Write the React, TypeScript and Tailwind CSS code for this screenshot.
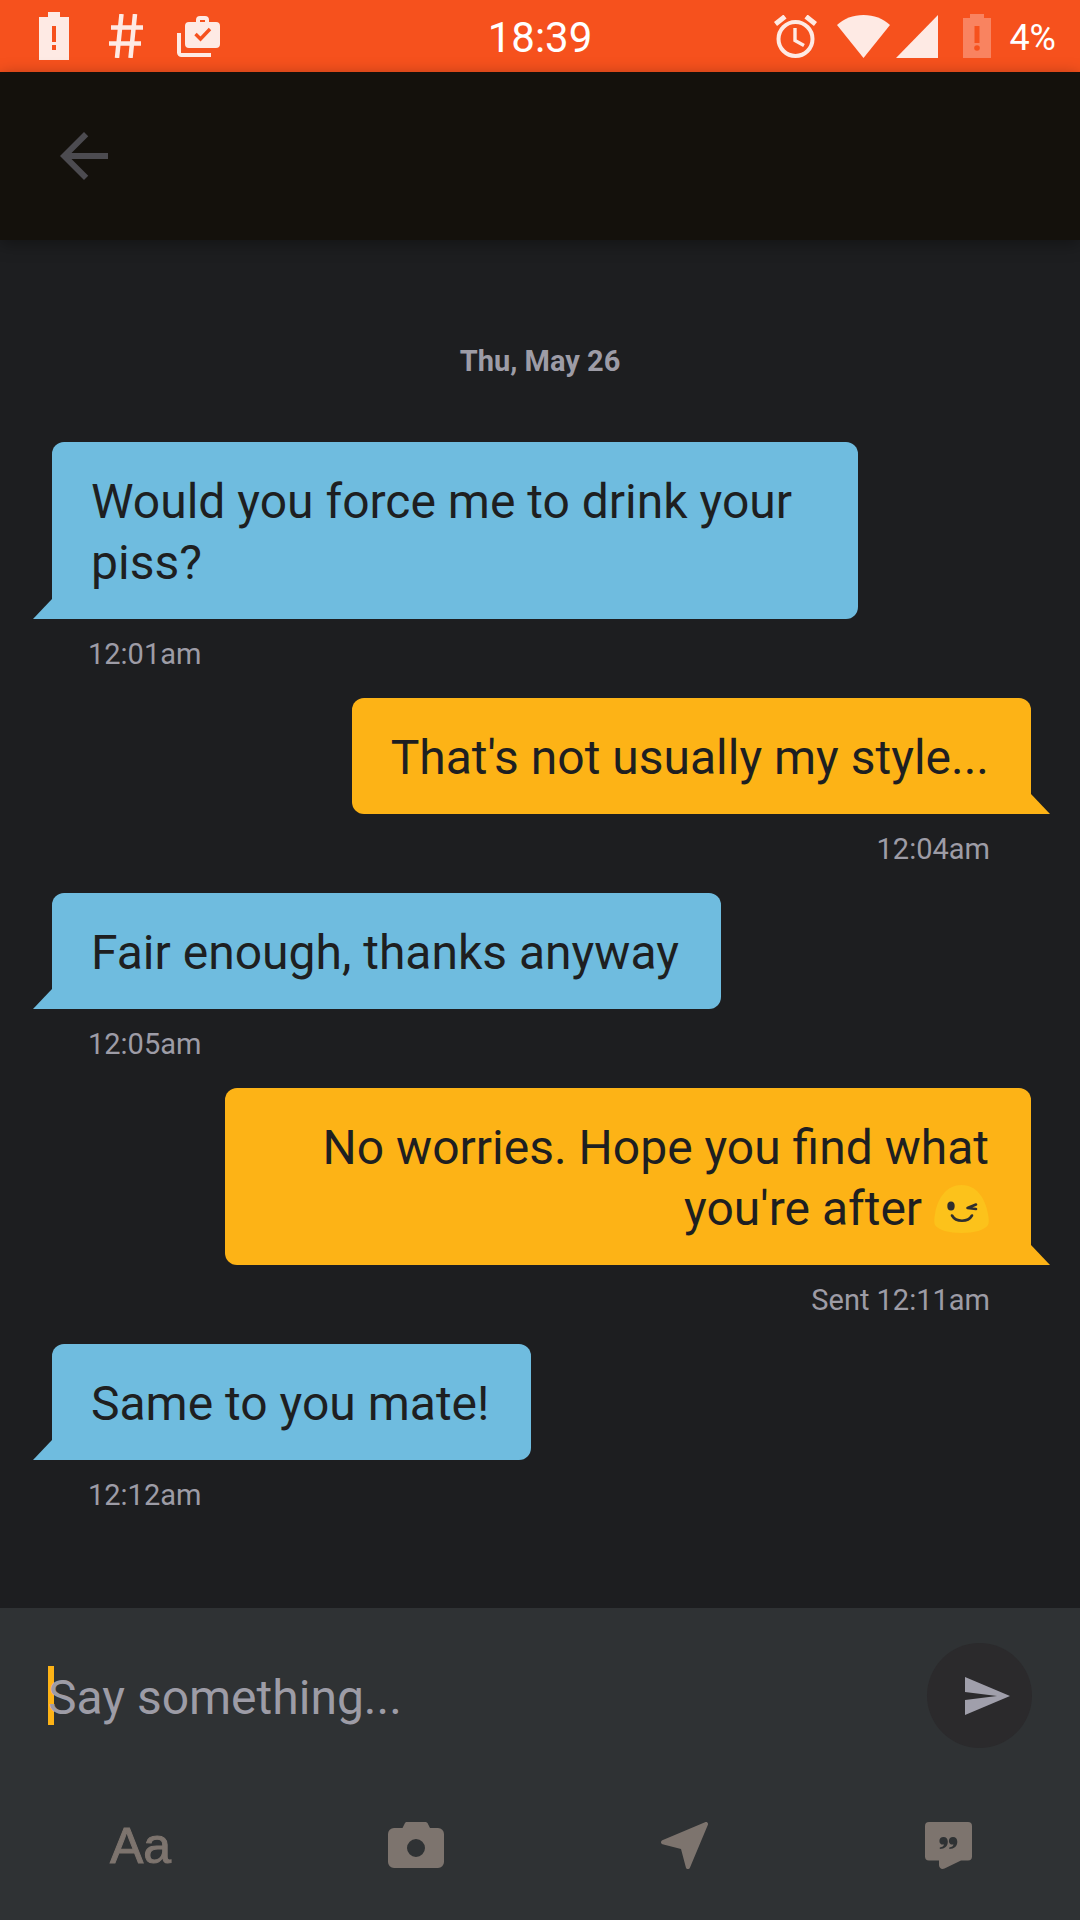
import type { ReactNode } from "react";

type Message = { from: "them" | "me"; body: ReactNode; time: string };

function WinkEmoji() {
  return (
    <svg role="img" aria-label="winking face" viewBox="0 0 55 48" className="inline-block h-12 w-[55px] align-[-8px]">
      <path d="M27.500 0C42 0 51 12 54 29c1 5 1 9 0 11-3 5-14 8-26.500 8S4 45 1 40c-1-2-1-6 0-11C4 12 13 0 27.500 0Z" fill="#fcc21b" />
      <ellipse cx="17" cy="21" rx="3.700" ry="4.500" fill="#2f2f2f" />
      <path d="M42 19.500 33.500 23 42 24" fill="none" stroke="#2f2f2f" strokeWidth="2.600" strokeLinecap="round" strokeLinejoin="round" />
      <path d="M18 30.500c4 7 16 7 20 0" fill="none" stroke="#2f2f2f" strokeWidth="2.600" strokeLinecap="round" />
    </svg>
  );
}

const messages: Message[] = [
  { from: "them", body: "Would you force me to drink your piss?", time: "12:01am" },
  { from: "me", body: "That's not usually my style...", time: "12:04am" },
  { from: "them", body: "Fair enough, thanks anyway", time: "12:05am" },
  {
    from: "me",
    body: (
      <>
        No worries. Hope you find what you're after <WinkEmoji />
      </>
    ),
    time: "Sent 12:11am",
  },
  { from: "them", body: "Same to you mate!", time: "12:12am" },
];

function StatusBar() {
  return (
    <div className="flex h-[72px] shrink-0 items-center bg-[#f6511d] px-6 text-white">
      <div className="flex flex-1 items-center text-[#feeae4]">
        <svg viewBox="0 0 30 48" className="ml-[15px] h-12 w-[30px]" fill="currentColor" aria-hidden="true">
          <path fillRule="evenodd" d="M9 0h12v5h9v43H0V5h9zM13 14v16h4V14zM13 33v5h4v-5z" />
        </svg>
        <svg viewBox="0 0 34 44" className="ml-10 h-11 w-[34px]" fill="none" stroke="currentColor" strokeWidth="4.500" aria-hidden="true">
          <path d="M12.500 0 8 44M26 0 21.500 44M2 13.500h32M0 29.500h32" />
        </svg>
        <svg viewBox="0 0 43 41" className="ml-[34px] h-[41px] w-[43px]" aria-hidden="true">
          <path d="M2 17v19.500a2.500 2.500 0 0 0 2.500 2.500H34" fill="none" stroke="currentColor" strokeWidth="4" />
          <path fill="currentColor" fillRule="evenodd" d="M12 6h7V4a4 4 0 0 1 4-4h5a4 4 0 0 1 4 4v2h7a4 4 0 0 1 4 4v18a4 4 0 0 1-4 4H12a4 4 0 0 1-4-4V10a4 4 0 0 1 4-4zm11 0h5V4h-5z" />
          <path d="m18.500 18 5 5L33 13" fill="none" stroke="#f6511d" strokeWidth="3.400" />
        </svg>
      </div>
      <time className="pt-1 text-[42px] leading-none">18:39</time>
      <div className="flex flex-1 items-center justify-end text-[#feeae4]">
        <svg viewBox="0 0 43 43" className="h-[43px] w-[43px]" fill="none" stroke="currentColor" aria-hidden="true">
          <circle cx="21.500" cy="24" r="17" strokeWidth="4" />
          <path d="M1.500 9 11 1.500M32 1.500 41.500 9" strokeWidth="5" />
          <path d="M21 13v12.500l9 5" strokeWidth="3.400" />
        </svg>
        <svg viewBox="0 0 53 43" className="ml-5 h-[43px] w-[53px]" fill="currentColor" aria-hidden="true">
          <path d="M26.500 43 0 10C7 3.500 16 0 26.500 0S46 3.500 53 10z" />
        </svg>
        <svg viewBox="0 0 42 43" className="ml-[6px] h-[43px] w-[42px]" fill="currentColor" aria-hidden="true">
          <path d="M42 0v43H0z" />
        </svg>
        <svg viewBox="0 0 28 44" className="ml-[25px] h-11 w-7" aria-hidden="true">
          <path d="M7 0h14v4h7v40H0V4h7z" fill="#f98360" />
          <path d="M11.500 12h5v17h-5z" fill="#f6511d" />
          <circle cx="14" cy="34" r="2.800" fill="#f6511d" />
        </svg>
        <span className="ml-[18px] pt-1 text-[36px] leading-none text-white">4%</span>
      </div>
    </div>
  );
}

function Bubble({ message }: { message: Message }) {
  const mine = message.from === "me";
  return (
    <li className={mine ? "flex flex-col items-end text-right" : "flex flex-col items-start"}>
      <div
        className={
          mine
            ? "relative max-w-[806px] rounded-xl rounded-br-none bg-[#fdb316] pt-[29px] pr-[42px] pb-[26px] pl-[39px] text-[48px] leading-[61px] text-[#1e1f21]"
            : "relative max-w-[806px] rounded-xl rounded-bl-none bg-[#6fbcdf] pt-[29px] pr-[42px] pb-[26px] pl-[39px] text-[48px] leading-[61px] text-[#1e1f21]"
        }
      >
        {message.body}
        <svg
          viewBox="0 0 19 20"
          aria-hidden="true"
          className={mine ? "absolute bottom-0 left-full h-5 w-[19px] text-[#fdb316]" : "absolute right-full bottom-0 h-5 w-[19px] text-[#6fbcdf]"}
        >
          <path d={mine ? "M0 0 19 20H0z" : "M19 0V20H0z"} fill="currentColor" />
        </svg>
      </div>
      <time className="mt-[15px] mb-6 pr-[41px] pl-9 text-[29px] leading-10 text-[#9d9ca6]">{message.time}</time>
    </li>
  );
}

export default function App() {
  return (
    <div className="flex min-h-screen flex-col bg-[#1d1e20] font-[Roboto,sans-serif]">
      <StatusBar />
      <header className="flex h-[168px] shrink-0 items-center bg-[#14110c] px-12 shadow-[0_4px_16px_rgba(0,0,0,0.35)]">
        <button type="button" aria-label="Back" className="text-[#4c4b50]">
          <svg viewBox="0 0 24 24" className="h-[72px] w-[72px]" fill="currentColor">
            <path d="M20 11H7.830l5.590-5.590L12 4l-8 8 8 8 1.410-1.410L7.830 13H20v-2z" />
          </svg>
        </button>
      </header>

      <main className="flex-1 pt-[101px]">
        <h2 className="mb-[61px] text-center text-[29px] leading-10 font-bold text-[#9d9ca6]">Thu, May 26</h2>
        <ul className="pr-[49px] pl-[52px]">
          {messages.map((m) => (
            <Bubble key={m.time} message={m} />
          ))}
        </ul>
      </main>

      <footer className="shrink-0 bg-[#2f3234] pt-[35px] pb-[51px]">
        <form className="flex h-[105px] items-center px-12" onSubmit={(e) => e.preventDefault()}>
          <div className="relative flex-1">
            <span className="absolute top-0 left-0 h-[59px] w-1.5 bg-[#fdb316]" aria-hidden="true" />
            <input
              type="text"
              aria-label="Message"
              placeholder="Say something..."
              className="relative block h-[60px] w-full bg-transparent pt-1 text-[48px] text-[#9d9ca6] outline-none placeholder:text-[#9d9ca6] placeholder:opacity-100"
            />
          </div>
          <button type="submit" aria-label="Send" className="flex h-[105px] w-[105px] items-center justify-center rounded-full bg-[#2b2a2c] pl-4">
            <svg viewBox="0 0 45 38" className="h-[38px] w-[45px]" fill="#a09fab">
              <path d="M0 0 45 19 0 38V23l32-4L0 15z" />
            </svg>
          </button>
        </form>
        <div className="mt-[74px] flex h-[47px] items-center justify-between pr-[108px] pl-[110px] text-[#7d746e]">
          <button type="button" aria-label="Text" className="font-['Liberation_Sans',sans-serif] text-[50px] leading-none [-webkit-text-stroke:1px_currentColor]">
            Aa
          </button>
          <button type="button" aria-label="Photo">
            <svg viewBox="0 0 56 47" className="h-[47px] w-14" fill="currentColor">
              <path fillRule="evenodd" d="M18 0h20l1.500 1 2.500 5h8a6 6 0 0 1 6 6v28a6 6 0 0 1-6 6H6a6 6 0 0 1-6-6V12a6 6 0 0 1 6-6h8.500l2.500-5zm10 17a9 9 0 1 0 0 18 9 9 0 0 0 0-18z" />
            </svg>
          </button>
          <button type="button" aria-label="Location">
            <svg viewBox="0 0 47 47" className="h-[47px] w-[47px]" fill="currentColor">
              <path d="M44 .2c2-.6 3.600.8 2.800 2.900L29 45.500c-.8 2-3.500 2-4.100 0L20 27 1.500 22.200c-2-.6-2-3.200-.2-4z" />
            </svg>
          </button>
          <button type="button" aria-label="Saved phrases">
            <svg viewBox="0 0 47 47" className="h-[47px] w-[47px]">
              <path d="M4 0h39a4 4 0 0 1 4 4v30.500a4 4 0 0 1-4 4h-7L19.500 46.600c-3 1.200-5.500-.6-5.500-3.600v-4.500H4a4 4 0 0 1-4-4V4a4 4 0 0 1 4-4z" fill="currentColor" />
              <g fill="#2f3234">
                <path d="M18.500 15c2.700 0 4.300 2 4.300 4.800 0 4.200-3 7.200-8 7.200v-1.500c2.600-.3 4-1.500 4.200-3-3 .5-4.600-1.300-4.600-3.600S16 15 18.500 15z" />
                <path d="M28 15c2.700 0 4.300 2 4.300 4.800 0 4.200-3 7.200-8 7.200v-1.500c2.600-.3 4-1.500 4.200-3-3 .5-4.600-1.300-4.600-3.600s1.600-3.900 4.100-3.900z" />
              </g>
            </svg>
          </button>
        </div>
      </footer>
    </div>
  );
}
